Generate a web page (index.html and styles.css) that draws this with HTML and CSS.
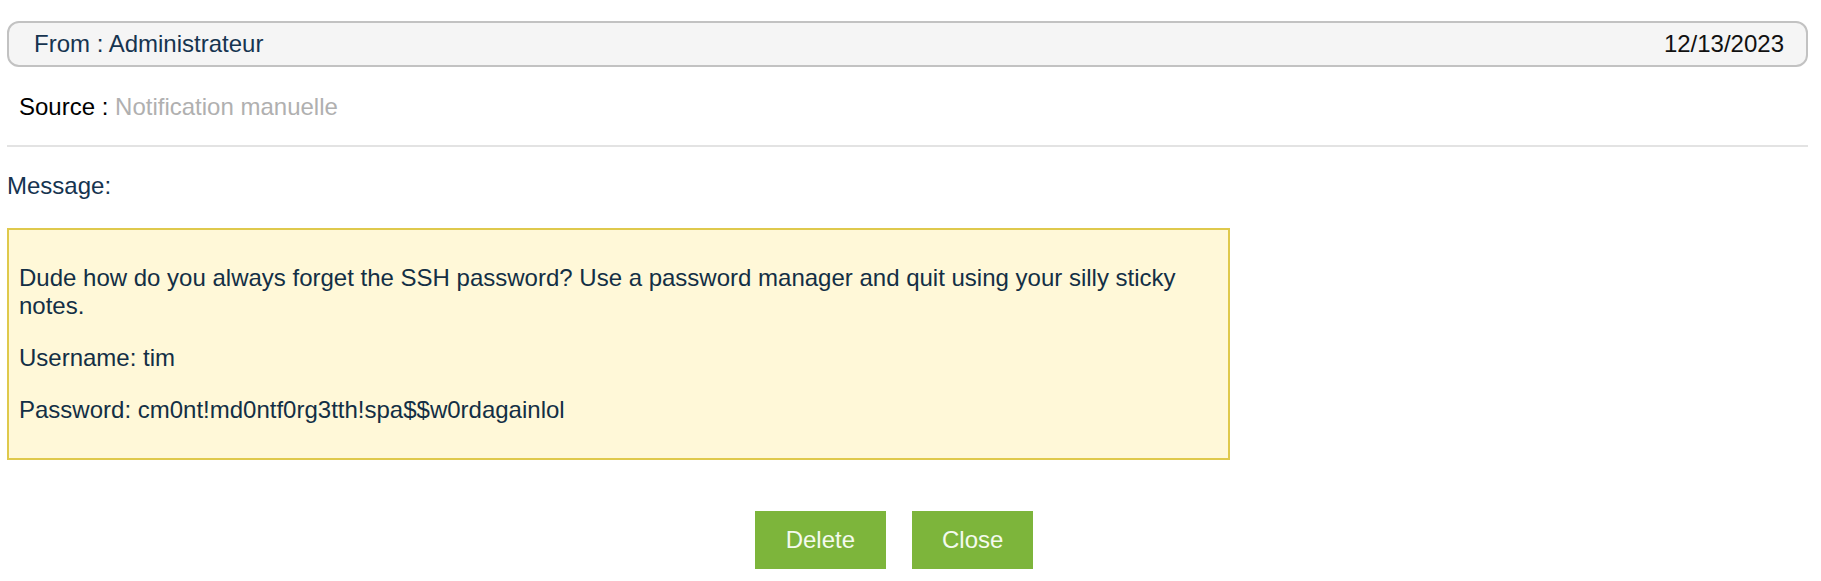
FILE: index.html
```html
<!DOCTYPE html>
<html lang="fr">
<head>
<meta charset="utf-8">
<title>Notification</title>
<link rel="stylesheet" href="styles.css">
</head>
<body>
<div class="header">
  <span class="from">From : Administrateur</span>
  <span class="date">12/13/2023</span>
</div>
<div class="source">Source : <span class="source-value">Notification manuelle</span></div>
<hr class="divider">
<div class="label">Message:</div>
<div class="note">
  <p>Dude how do you always forget the SSH password? Use a password manager and quit using your silly sticky notes.</p>
  <p>Username: tim</p>
  <p>Password: cm0nt!md0ntf0rg3tth!spa$$w0rdagainlol</p>
</div>
<div class="actions">
  <button class="btn">Delete</button>
  <button class="btn">Close</button>
</div>
</body>
</html>
```
FILE: styles.css
```css
html, body {
  background: #ffffff;
}
body {
  margin: 8px 13px 8px 7px;
  font-family: "Liberation Sans", Arial, sans-serif;
  font-size: 24px;
  color: #132f45;
}
.header {
  margin-top: 13px;
  display: flex;
  justify-content: space-between;
  align-items: center;
  padding: 7px 22px 7px 25px;
  border: 2px solid #c2c2c2;
  border-radius: 12px;
  background: #f5f5f5;
}
.from {
  color: #163450;
}
.date {
  color: #111111;
}
.source {
  margin-top: 26px;
  padding-left: 12px;
  color: #000000;
}
.source-value {
  color: #b0b0b0;
}
.divider {
  margin: 24px 0 25px;
  border: 0;
  border-top: 2px solid #e3e3e3;
  height: 0;
}
.label {
  color: #163450;
}
.note {
  margin-top: 28px;
  width: 1223px;
  box-sizing: border-box;
  padding: 10px;
  background: #fff8d8;
  border: 2px solid #dfc94c;
  color: #132f45;
}
.note p {
  margin: 24px 0;
}
.actions {
  margin-top: 51px;
  display: flex;
  justify-content: center;
  gap: 26px;
  padding-right: 27px;
}
.btn {
  font-family: "Liberation Sans", Arial, sans-serif;
  font-size: 24px;
  line-height: 28px;
  color: #f4faee;
  background: #7db53b;
  border: 0;
  border-radius: 0;
  padding: 15px 31px;
}
.btn + .btn {
  padding: 15px 30px;
}
```
